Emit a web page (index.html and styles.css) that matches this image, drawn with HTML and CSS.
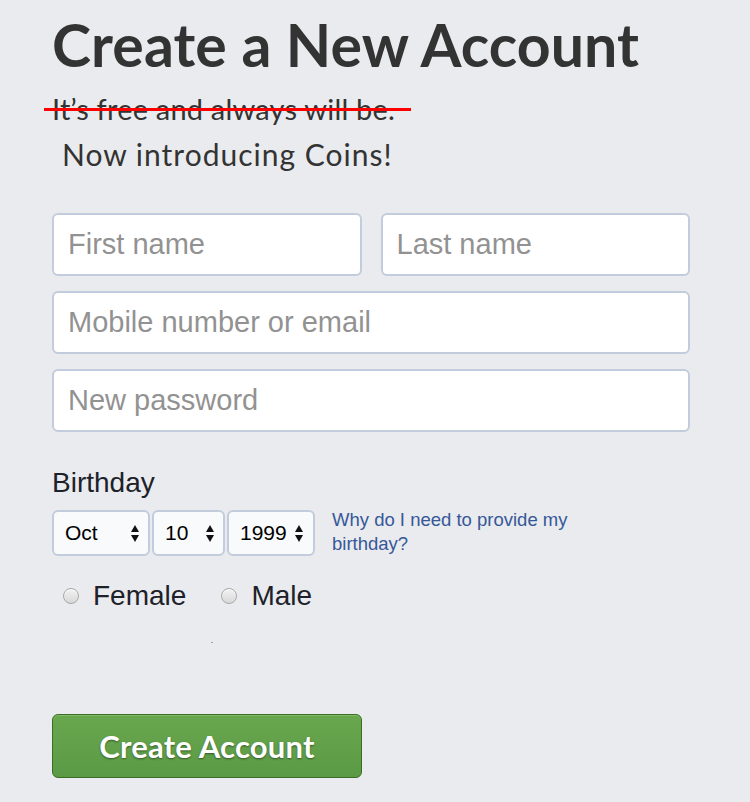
FILE: index.html
```html
<!DOCTYPE html>
<html>
<head>
<meta charset="utf-8">
<link rel="stylesheet" href="styles.css">
</head>
<body>
<div class="page">
  <h1 class="title">Create a New Account</h1>
  <p class="free"><span class="strike">It’s free and always will be.</span></p>
  <p class="coins">Now introducing Coins!</p>
  <form class="form">
    <div class="row">
      <input class="field" type="text" placeholder="First name">
      <input class="field" type="text" placeholder="Last name">
    </div>
    <input class="field" type="text" placeholder="Mobile number or email">
    <input class="field" type="password" placeholder="New password">
    <div class="birthday">Birthday</div>
    <div class="bdrow">
      <div class="sel sel-month"><span>Oct</span><span class="arr"></span></div>
      <div class="sel sel-day"><span>10</span><span class="arr"></span></div>
      <div class="sel sel-year"><span>1999</span><span class="arr"></span></div>
      <a class="why" href="#">Why do I need to provide my birthday?</a>
    </div>
    <div class="gender">
      <label class="radio"><span class="dot"></span>Female</label>
      <label class="radio"><span class="dot"></span>Male</label>
    </div>
    <div class="speck"></div>
    <button class="submit" type="button">Create Account</button>
  </form>
</div>
</body>
</html>
```
FILE: styles.css
```css
html, body {
  margin: 0;
  padding: 0;
  background: #e9ebee;
}
.page {
  padding: 13px 0 0 52px;
  width: 638px;
  font-family: Lato, "Open Sans", sans-serif;
  color: #1d2129;
}
.title {
  margin: 0;
  font-size: 59px;
  font-weight: 700;
  line-height: 64px;
  color: #333333;
  letter-spacing: 0.1px;
  white-space: nowrap;
}
.free {
  margin: 16px 0 0 0;
  font-size: 29px;
  line-height: 32px;
  color: #333;
  letter-spacing: 0.2px;
}
.strike {
  position: relative;
  display: inline-block;
}
.strike::after {
  content: "";
  position: absolute;
  left: -8px;
  right: -16px;
  top: 15px;
  height: 3px;
  background: #ff0000;
}
.coins {
  margin: 12px 0 0 10px;
  font-size: 30px;
  line-height: 34px;
  color: #333;
  letter-spacing: 1px;
}
.form {
  margin-top: 42px;
  display: flex;
  flex-direction: column;
  gap: 15px;
}
.row {
  display: flex;
  gap: 19px;
}
.field {
  box-sizing: border-box;
  height: 63px;
  width: 100%;
  min-width: 0;
  border: 2px solid #c3ccdc;
  border-radius: 6px;
  background: #fff;
  padding: 0 14px;
  font-family: "Liberation Sans", Arial, sans-serif;
  font-size: 29px;
  color: #1d2129;
  outline: none;
}
.field::placeholder {
  color: #929292;
}
.birthday {
  margin-top: 20px;
  font-family: "Liberation Sans", Arial, sans-serif;
  font-size: 28px;
  line-height: 32px;
  color: #1d2129;
}
.bdrow {
  margin-top: -4px;
  display: flex;
  align-items: flex-start;
  gap: 2px;
}
.sel {
  box-sizing: border-box;
  height: 46px;
  border: 2px solid #c3ccdc;
  border-radius: 6px;
  background: #f9fafb;
  display: flex;
  align-items: center;
  justify-content: space-between;
  padding: 0 8px 0 11px;
  font-family: "Liberation Sans", Arial, sans-serif;
  font-size: 21px;
  color: #000;
}
.sel-month { width: 98px; }
.sel-day { width: 73px; }
.sel-year { width: 88px; padding-right: 9px; }
.arr {
  position: relative;
  width: 9px;
  height: 17px;
}
.arr::before, .arr::after {
  content: "";
  position: absolute;
  left: 0;
  border-left: 4.5px solid transparent;
  border-right: 4.5px solid transparent;
}
.arr::before {
  top: 0;
  border-bottom: 7px solid #111;
}
.arr::after {
  bottom: 0;
  border-top: 7px solid #111;
}
.why {
  margin-left: 15px;
  margin-top: -2px;
  width: 260px;
  font-family: "Liberation Sans", Arial, sans-serif;
  font-size: 18.5px;
  line-height: 24px;
  color: #365899;
  text-decoration: none;
}
.gender {
  margin-top: 7px;
  display: flex;
  gap: 35px;
  padding-left: 11px;
}
.radio {
  display: flex;
  align-items: center;
  gap: 14px;
  font-family: "Liberation Sans", Arial, sans-serif;
  font-size: 28px;
  line-height: 36px;
  color: #1d2129;
}
.dot {
  box-sizing: border-box;
  width: 16px;
  height: 16px;
  border-radius: 50%;
  border: 1px solid #a8a8a8;
  background: linear-gradient(#f2f2f2, #d8d8d8);
  box-shadow: inset 0 1px 1px rgba(255,255,255,0.8);
}
.speck {
  margin: 13px 0 0 159px;
  width: 2px;
  height: 1px;
  background: #9aa0ae;
}
.submit {
  margin-top: 56px;
  box-sizing: border-box;
  width: 310px;
  height: 64px;
  border: 1px solid #3b6e22;
  border-radius: 6px;
  background: linear-gradient(#69a74e, #5b9a45);
  box-shadow: inset 0 1px 0 #80bc68;
  color: #fff;
  font-family: Lato, sans-serif;
  font-weight: 700;
  font-size: 31px;
  letter-spacing: 0.2px;
  text-shadow: 0 1px 2px rgba(0,0,0,0.45);
  cursor: pointer;
}
```
